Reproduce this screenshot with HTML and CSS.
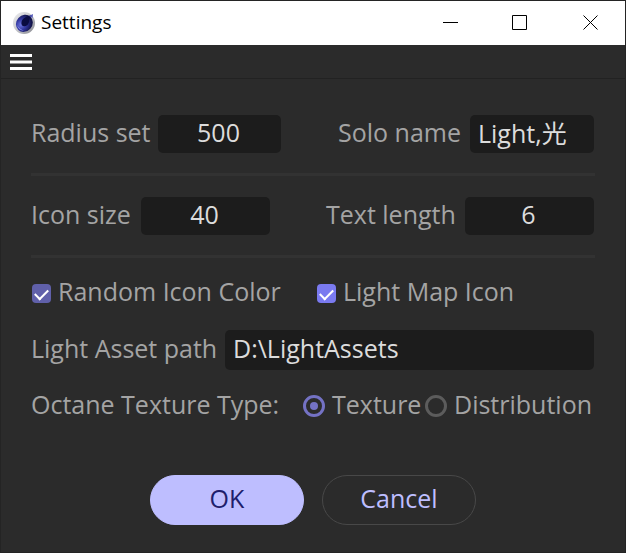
FILE: index.html
```html
<!DOCTYPE html>
<html lang="en">
<head>
<meta charset="utf-8">
<title>Settings</title>
<link rel="stylesheet" href="styles.css">
</head>
<body>
<main class="window">
  <header class="titlebar">
    <svg class="logo" viewBox="0 0 24 24" aria-hidden="true">
      <defs>
        <linearGradient id="rim" x1="0" y1="0" x2="1" y2="1">
          <stop offset="0" stop-color="#f0f0f2"/><stop offset=".5" stop-color="#c4c5ca"/><stop offset="1" stop-color="#85868c"/>
        </linearGradient>
        <radialGradient id="ball" cx=".4" cy=".68" r=".62">
          <stop offset="0" stop-color="#6f78e0"/><stop offset=".5" stop-color="#3338a0"/><stop offset="1" stop-color="#14154c"/>
        </radialGradient>
      </defs>
      <circle cx="12" cy="12" r="11" fill="url(#rim)"/>
      <ellipse cx="12.500" cy="12" rx="8" ry="9" transform="rotate(42 12 12)" fill="url(#ball)"/>
      <path d="M20 4C15 5 10.500 7 9.500 11c-.6 3 1 4.500 3.200 4.300 3.200-.3 4.300-3.300 4.500-5.800C17.400 7.500 18.500 6 20 4z" fill="#0a0c40"/>
      <path d="M5 14c1 3.500 3.500 5.500 7 6C9 18.500 6.500 16.500 5 14z" fill="#8e96f0"/>
      <path d="M17 5l4-2-.5 4z" fill="#5359b8"/>
    </svg>
    <h1 class="title">Settings</h1>
    <div class="controls">
      <button class="control" aria-label="Minimize"><svg viewBox="0 0 16 16"><path d="M1 7.500h15"/></svg></button>
      <button class="control" aria-label="Maximize"><svg viewBox="0 0 16 16"><path d="M.5.500h14v14H.5z"/></svg></button>
      <button class="control" aria-label="Close"><svg viewBox="0 0 16 16"><path d="M1.500.500l14 14M15.500.500l-14 14"/></svg></button>
    </div>
  </header>
  <nav class="menubar">
    <button class="menu" aria-label="Menu"><svg viewBox="0 0 23 16"><path d="M1 1.500h22M1 8h22M1 14.500h22"/></svg></button>
  </nav>
  <form class="form">
    <div class="row row-first">
      <div class="field field-radius"><label class="caption" for="radius">Radius set</label><input id="radius" class="box number" type="text" value="500"></div>
      <div class="field field-solo"><label class="caption" for="solo">Solo name</label><input id="solo" class="box" type="text" value="Light,光"></div>
    </div>
    <hr class="divider">
    <div class="row row-second">
      <div class="field field-icon"><label class="caption" for="icon">Icon size</label><input id="icon" class="box number" type="text" value="40"></div>
      <div class="field field-length"><label class="caption" for="length">Text length</label><input id="length" class="box number" type="text" value="6"></div>
    </div>
    <hr class="divider">
    <div class="row row-checks">
      <label class="option"><input class="check check-dim" type="checkbox" checked><span class="caption">Random Icon Color</span></label>
      <label class="option"><input class="check" type="checkbox" checked><span class="caption">Light Map Icon</span></label>
    </div>
    <div class="row field-path"><label class="caption" for="path">Light Asset path</label><input id="path" class="box box-path" type="text" value="D:\LightAssets"></div>
    <div class="row row-radios" role="radiogroup" aria-labelledby="type">
      <span class="caption" id="type">Octane Texture Type:</span>
      <label class="option"><input class="radio" type="radio" name="type" checked><span class="caption">Texture</span></label>
      <label class="option"><input class="radio" type="radio" name="type"><span class="caption">Distribution</span></label>
    </div>
    <div class="actions">
      <button class="button primary" type="button">OK</button>
      <button class="button" type="button">Cancel</button>
    </div>
  </form>
</main>
</body>
</html>
```
FILE: styles.css
```css
* { box-sizing: border-box; }
body {
  margin: 0;
  background: #2b2b2b;
  color: #a4a4a4;
  font: 25px/24px "Open Sans", "Noto Sans CJK SC", sans-serif;
}
.window { min-height: 100vh; border: 1px solid #242424; }
.titlebar {
  display: flex;
  align-items: center;
  height: 44px;
  padding-left: 11px;
  background: #fff;
  color: #000;
}
.logo { width: 24px; height: 24px; }
.title { margin: 0 auto 0 5px; padding-bottom: 2px; font-size: 19px; font-weight: 400; line-height: 24px; }
.controls { display: flex; }
.control {
  display: grid;
  place-items: center;
  width: 70px;
  height: 44px;
  padding: 0;
  border: 0;
  background: none;
}
.control svg { width: 16px; height: 16px; fill: none; stroke: #000; }
.menubar {
  display: flex;
  align-items: center;
  height: 34px;
  padding-left: 8px;
  border-bottom: 1px solid #222;
}
.menu { display: flex; padding: 0; border: 0; background: none; }
.menu svg { width: 23px; height: 16px; stroke: #fff; stroke-width: 3; }
.form { padding: 36px 30px 26px; }
.row { display: grid; align-items: center; padding-right: 1px; white-space: nowrap; }
.row-first, .row-second { justify-content: space-between; }
.row-first { grid-template-columns: 250px 256px; }
.row-second { grid-template-columns: 239px 268px; }
.field, .field-path { display: grid; align-items: center; }
.field-radius { grid-template-columns: 127px 1fr; }
.field-solo { grid-template-columns: 132px 1fr; }
.field-icon { grid-template-columns: 110px 1fr; }
.field-length { grid-template-columns: 139px 1fr; }
.field-path { grid-template-columns: 194px 1fr; }
.caption { padding-bottom: 4px; }
.box {
  width: 100%;
  min-width: 0;
  height: 38px;
  padding: 0 8px 4px;
  border: 0;
  border-radius: 5px;
  background: #1c1c1c;
  color: #dcdcdc;
  font: inherit;
}
.box-path { height: 40px; }
.number { padding-right: 10px; text-align: center; }
.divider { height: 3px; margin: 20px 0 21px; border: 0; background: #323232; }
.row-checks { grid-template-columns: 285px 1fr; margin-bottom: 23px; }
.option { display: flex; align-items: center; gap: 7px; }
.check, .radio { flex: none; margin: 0; appearance: none; }
.check {
  display: grid;
  justify-items: center;
  width: 19px;
  height: 19px;
  margin-left: 1px;
  padding-top: 5px;
  border-radius: 4px;
  background: #7a7af0;
}
.check-dim { background: #6060aa; }
.check::before {
  content: "";
  width: 11px;
  height: 6px;
  border: solid #fff;
  border-width: 0 0 2px 2px;
  transform: rotate(-45deg);
}
.radio {
  display: grid;
  place-items: center;
  width: 22px;
  height: 22px;
  border: 3px solid #5c5c5c;
  border-radius: 50%;
}
.radio:checked { border-color: #7472c4; }
.radio:checked::before {
  content: "";
  width: 8px;
  height: 8px;
  border-radius: 50%;
  background: #7472c4;
}
.row-radios { grid-template-columns: 272px 122px 1fr; margin-top: 22px; }
.actions { display: flex; justify-content: center; gap: 18px; margin-top: 55px; }
.button {
  width: 154px;
  height: 50px;
  padding: 0 0 4px;
  border: 1px solid #484848;
  border-radius: 25px;
  background: none;
  color: #bebeff;
  font: inherit;
}
.primary { border-color: #bebeff; background: #bebeff; color: #1e1e6c; }
```
